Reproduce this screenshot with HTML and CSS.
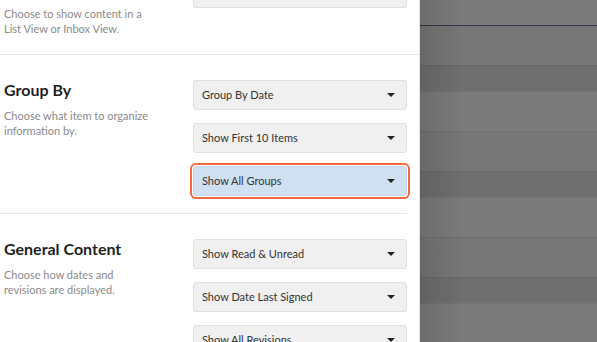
FILE: index.html
```html
<!DOCTYPE html>
<html>
<head>
<meta charset="utf-8">
<link rel="stylesheet" href="styles.css">
</head>
<body>
<div class="screen">
  <div class="panel">
    <div class="panel-scroll">
      <section class="section section-wide">
        <div class="info">
          <h2 class="title">View</h2>
          <p class="desc">Choose to show content in a List View or Inbox View.</p>
        </div>
        <div class="controls">
          <div class="select"><span>List View</span><i class="caret"></i></div>
        </div>
      </section>
      <section class="section">
        <div class="info">
          <h2 class="title">Group By</h2>
          <p class="desc">Choose what item to organize information by.</p>
        </div>
        <div class="controls">
          <div class="select"><span>Group By Date</span><i class="caret"></i></div>
          <div class="select"><span>Show First 10 Items</span><i class="caret"></i></div>
          <div class="select focused"><span>Show All Groups</span><i class="caret"></i></div>
        </div>
      </section>
      <section class="section">
        <div class="info">
          <h2 class="title">General Content</h2>
          <p class="desc">Choose how dates and revisions are displayed.</p>
        </div>
        <div class="controls">
          <div class="select"><span>Show Read &amp; Unread</span><i class="caret"></i></div>
          <div class="select"><span>Show Date Last Signed</span><i class="caret"></i></div>
          <div class="select"><span>Show All Revisions</span><i class="caret"></i></div>
        </div>
      </section>
    </div>
  </div>
  <div class="backdrop">
    <div class="row light r-top"></div>
    <div class="row medium selected"></div>
    <div class="row dark"></div>
    <div class="row light"></div>
    <div class="row medium"></div>
    <div class="row dark"></div>
    <div class="row light"></div>
    <div class="row medium"></div>
    <div class="row dark"></div>
    <div class="row light"></div>
  </div>
</div>
</body>
</html>
```
FILE: styles.css
```css
* { box-sizing: border-box; }
html, body { margin: 0; padding: 0; }
body {
  width: 597px;
  height: 342px;
  overflow: hidden;
  font-family: "Lato", "Open Sans", sans-serif;
  background: #7a7a7a;
}
.screen {
  display: flex;
  width: 597px;
  height: 342px;
  overflow: hidden;
}
.panel {
  width: 420px;
  flex: none;
  background: #fff;
  border-right: 1px solid #e4e4e4;
  overflow: hidden;
}
.panel-scroll {
  margin-top: -47px;
}
.section {
  display: flex;
  padding: 25px 0 17px 4px;
  border-bottom: 1px solid #e6e6e6;
  margin-right: 12px;
}
.section-wide {
  margin-right: 0;
  padding-bottom: 18px;
}
.info {
  width: 189px;
  flex: none;
}
.title {
  margin: 0;
  font-size: 16px;
  line-height: 20px;
  font-weight: 700;
  color: #1f1f1f;
}
.desc {
  margin: 8px 0 0;
  width: 150px;
  font-size: 11px;
  line-height: 15px;
  color: #8a8a8a;
}
.controls {
  display: flex;
  flex-direction: column;
  gap: 13px;
  width: 214px;
}
.select {
  height: 30px;
  display: flex;
  align-items: center;
  justify-content: space-between;
  padding: 0 11px 2px 8px;
  background: #f0f0f0;
  border: 1px solid #e0e0e0;
  border-radius: 3px;
  font-size: 11px;
  color: #333;
}
.select.focused {
  background: #cfe0f1;
  border-color: #c3d5e8;
  box-shadow: 0 0 0 1px #fff, 0 0 0 3px #f2693d;
}
.caret {
  width: 0;
  height: 0;
  margin-top: 2px;
  border-left: 4px solid transparent;
  border-right: 4px solid transparent;
  border-top: 4px solid #222;
}
.backdrop {
  flex: 1;
  display: flex;
  flex-direction: column;
  position: relative;
  margin-top: -14px;
}
.backdrop::after {
  content: "";
  position: absolute;
  inset: 0 auto 0 0;
  width: 45px;
  background: linear-gradient(to right, rgba(0,0,0,0.12), rgba(0,0,0,0));
}
.row { flex: none; border-top: 1px solid rgba(0,0,0,0.05); }
.row.light { height: 40px; background: #7b7b7b; }
.row.medium { height: 40px; background: #777777; }
.row.dark { height: 26px; background: #6f6f6f; }
.row.r-top { height: 39px; border-top: none; }
.row.selected { border-top: 1px solid #2e3a46; }
```
